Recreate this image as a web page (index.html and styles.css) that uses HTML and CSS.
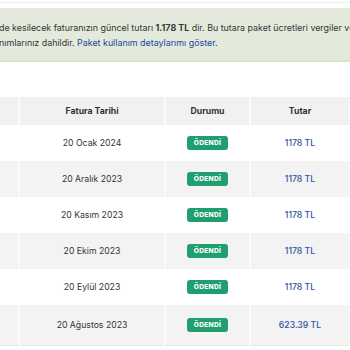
FILE: index.html
```html
<!DOCTYPE html>
<html lang="tr">
<head>
<meta charset="utf-8">
<link rel="stylesheet" href="styles.css">
</head>
<body>
<div class="topbar"></div>
<div class="alert">
  <p class="line">de kesilecek faturanızın güncel tutarı <b>1.178 TL</b> dir. Bu tutara paket ücretleri vergiler ve sms kullanımlarınız</p>
  <p class="line">nımlarınız dahildir. <a class="link" href="#">Paket kullanım detaylarımı göster</a>.</p>
</div>
<table class="invoices">
  <thead>
    <tr><th class="c0"></th><th class="c1">Fatura Tarihi</th><th class="c2">Durumu</th><th class="c3">Tutar</th><th class="c4"></th></tr>
  </thead>
  <tbody>
    <tr><td></td><td>20 Ocak 2024</td><td><span class="badge">ÖDENDİ</span></td><td class="amt">1178 TL</td><td></td></tr>
    <tr><td></td><td>20 Aralık 2023</td><td><span class="badge">ÖDENDİ</span></td><td class="amt">1178 TL</td><td></td></tr>
    <tr><td></td><td>20 Kasım 2023</td><td><span class="badge">ÖDENDİ</span></td><td class="amt">1178 TL</td><td></td></tr>
    <tr><td></td><td>20 Ekim 2023</td><td><span class="badge">ÖDENDİ</span></td><td class="amt">1178 TL</td><td></td></tr>
    <tr><td></td><td>20 Eylül 2023</td><td><span class="badge">ÖDENDİ</span></td><td class="amt">1178 TL</td><td></td></tr>
    <tr><td></td><td>20 Ağustos 2023</td><td><span class="badge">ÖDENDİ</span></td><td class="amt">623.39 TL</td><td></td></tr>
  </tbody>
</table>
</body>
</html>
```
FILE: styles.css
```css
html, body {
  margin: 0;
  padding: 0;
  background: #fff;
  overflow: hidden;
}
body {
  font-family: Inter, "Noto Sans", sans-serif;
  color: #333;
  width: 350px;
}
.topbar {
  height: 2px;
  border-bottom: 1px solid #eeeeee;
}
.alert {
  margin-top: 5px;
  background: #e3eadb;
  border-bottom: 2px solid #d8e5cd;
  padding: 12px 0 10px 0;
  font-size: 8.9px;
  color: #363636;
  white-space: nowrap;
  overflow: hidden;
}
.line {
  margin: 0;
  line-height: 15px;
  text-indent: -1px;
}
.alert b {
  font-weight: 700;
}
.link {
  color: #22479b;
  text-decoration: none;
}
.invoices {
  margin-top: 35px;
  margin-left: -60px;
  border-collapse: collapse;
  table-layout: fixed;
  width: 470px;
  font-size: 8.7px;
  border-bottom: 1px solid #e8e8e8;
}
.c0 { width: 78px; }
.c1 { width: 144px; }
.c2 { width: 83px; }
.c3 { width: 98px; }
.c4 { width: 67px; }
.invoices th, .invoices td {
  text-align: center;
  padding: 0;
  border-left: 2px solid #fbfbfb;
}
.invoices th:first-child, .invoices td:first-child {
  border-left: none;
}
.invoices thead tr {
  background: #f1f1f1;
  height: 28px;
}
.invoices th {
  font-weight: 700;
  color: #333;
}
.invoices tbody tr {
  height: 36px;
}
.invoices tbody tr:nth-child(even) {
  background: #f3f3f3;
}
.invoices tbody tr:nth-child(odd) td {
  border-left-color: #fff;
}
.invoices tbody tr:last-child {
  height: 40px;
}
.badge {
  display: inline-block;
  background: #1f9f70;
  color: #fff;
  font-size: 6.6px;
  font-weight: 800;
  letter-spacing: 0.3px;
  line-height: 14px;
  height: 14px;
  padding: 0 7px;
  border-radius: 3px;
  vertical-align: middle;
}
.amt {
  color: #2e52a3;
  font-weight: 500;
}
```
